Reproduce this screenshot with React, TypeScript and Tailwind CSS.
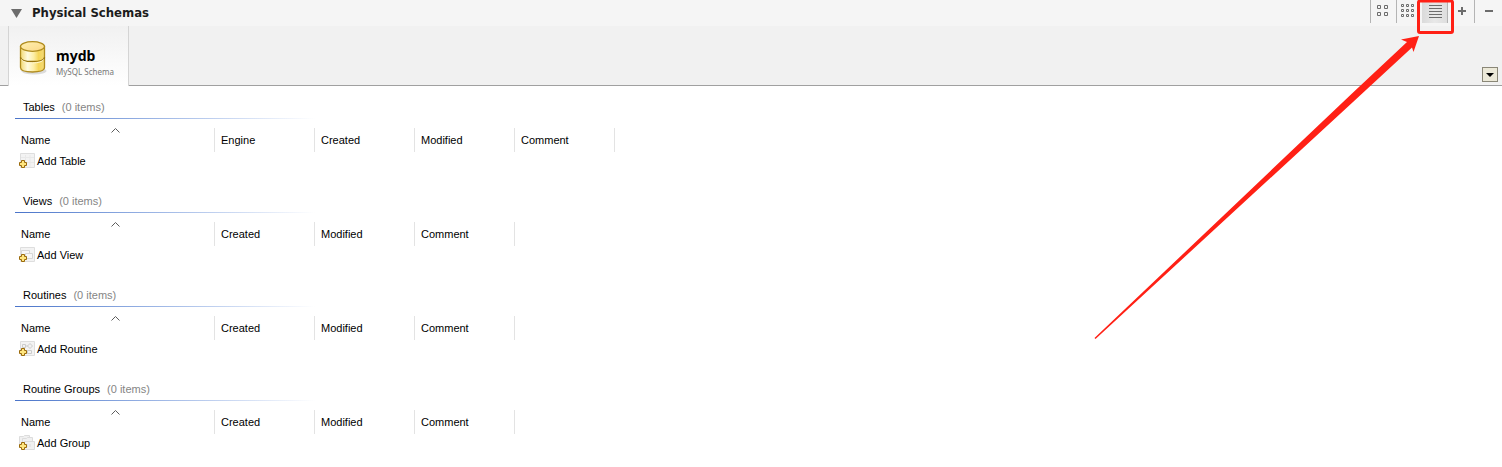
import type { ReactNode } from 'react';

interface SchemaSection {
  id: string;
  title: string;
  action: string;
  columns: string[];
}

const sections: SchemaSection[] = [
  { id: 'table', title: 'Tables', action: 'Add Table', columns: ['Engine', 'Created', 'Modified', 'Comment'] },
  { id: 'view', title: 'Views', action: 'Add View', columns: ['Created', 'Modified', 'Comment'] },
  { id: 'routine', title: 'Routines', action: 'Add Routine', columns: ['Created', 'Modified', 'Comment'] },
  { id: 'group', title: 'Routine Groups', action: 'Add Group', columns: ['Created', 'Modified', 'Comment'] },
];

function DatabaseIcon() {
  return (
    <svg width="30" height="36" viewBox="0 0 30 36" aria-hidden="true">
      <defs>
        <linearGradient id="db-body" x1="0" x2="1">
          <stop offset="0" stopColor="#f3d973" />
          <stop offset="0.3" stopColor="#fffbe0" />
          <stop offset="0.55" stopColor="#fdeea6" />
          <stop offset="0.75" stopColor="#f5d65a" />
          <stop offset="1" stopColor="#f3d978" />
        </linearGradient>
        <linearGradient id="db-top" x1="0" x2="1" y1="0" y2="1">
          <stop offset="0" stopColor="#fff0b0" />
          <stop offset="1" stopColor="#fbd887" />
        </linearGradient>
      </defs>
      <ellipse cx="16" cy="31" rx="12.5" ry="3.5" fill="#000" opacity="0.13" />
      <path d="M2.5 6.5v21c0 3 5.4 4.5 12 4.5s12-1.5 12-4.5v-21z" fill="url(#db-body)" stroke="#b08c1e" strokeWidth="1.3" />
      <path d="M2.5 17.2c0 2.9 5.4 4.3 12 4.3s12-1.4 12-4.3" fill="none" stroke="#97740e" strokeWidth="1.3" />
      <path d="M3.5 19.4c1 2.4 5.6 3.5 11 3.5s10-1.1 11-3.5" fill="none" stroke="#fff7cf" strokeWidth="1" />
      <ellipse cx="14.5" cy="6.5" rx="12" ry="4.8" fill="url(#db-top)" stroke="#b08c1e" strokeWidth="1.2" />
    </svg>
  );
}

function AddIcon({ kind }: { kind: string }) {
  return (
    <svg width="16" height="16" viewBox="0 0 16 16" aria-hidden="true">
      {kind !== 'group' && (
        <path d="M1.5 .5h14v14h-14z" fill="#f3f3f3" stroke="#dedede" />
      )}
      {kind === 'table' && <path d="M2 4.5h13M6.5 2v12M11 2v12M2 9.5h13" stroke="#e9e9e9" fill="none" />}
      {kind === 'view' && (
        <g fill="#f7f7f7" stroke="#d6d6d6">
          <path d="M2.5 3.5h8v6h-8z" />
          <path d="M6.5 6.5h7v5h-7z" />
        </g>
      )}
      {kind === 'routine' && (
        <g fill="none" stroke="#cccccc">
          <path d="M3.5 3.5h3v3h-3zM8.5 9.5h4v3h-4zM5 7v3M7 5h2" />
          <path d="M11 2.5l2.5 2.5-2.5 2.5-2.5-2.5z" />
        </g>
      )}
      {kind === 'group' && (
        <g fill="#f0f0f0" stroke="#dcdcdc">
          <path d="M.5 1.5h4l1-1h5v11h-10z" />
          <path d="M3.5 3.5h4l1-1h5v10h-10z" />
          <path d="M5.5 6.5h10v8h-10zM8 9v3M11 9v3" />
        </g>
      )}
      <path d="M2.5 7.5h3v2h2v3h-2v2h-3v-2h-2v-3h2z" fill="#ffe680" stroke="#9a6a0c" />
    </svg>
  );
}

function ToolButton({ label, className, children }: { label: string; className: string; children: ReactNode }) {
  return (
    <button type="button" aria-label={label} className={`flex h-[23px] w-[26px] items-center pb-px pl-1 ${className}`}>
      <svg width="16" height="16" viewBox="0 0 16 16" aria-hidden="true">
        {children}
      </svg>
    </button>
  );
}

function Toolbar() {
  return (
    <div className="flex h-[23px] pr-[2px]">
      <ToolButton label="Large icons" className="border-l border-[#b4b4b4]">
        <path d="M2.5 2.5h3v3h-3zM9.5 2.5h3v3h-3zM2.5 9.5h3v3h-3zM9.5 9.5h3v3h-3z" fill="none" stroke="#6c6c6c" />
      </ToolButton>
      <ToolButton label="Small icons" className="border-l border-[#b4b4b4]">
        <path
          d="M.5 1.5h2v2h-2zM5.5 1.5h2v2h-2zM10.5 1.5h2v2h-2zM.5 6.5h2v2h-2zM5.5 6.5h2v2h-2zM10.5 6.5h2v2h-2zM.5 11.5h2v2h-2zM5.5 11.5h2v2h-2zM10.5 11.5h2v2h-2z"
          fill="none"
          stroke="#6c6c6c"
        />
      </ToolButton>
      <ToolButton label="Details" className="border-r border-[#b4b4b4] bg-linear-to-r from-[#dadada] via-[#e8e8e8] to-[#dedede]">
        <path d="M3 2.5h13M3 5.5h13M3 8.5h13M3 11.5h13M3 14.5h13" stroke="#6c6c6c" />
      </ToolButton>
      <ToolButton label="Add schema" className="">
        <path d="M6 8h8M10 4v8" stroke="#6c6c6c" strokeWidth="2" />
      </ToolButton>
      <ToolButton label="Remove schema" className="border-l border-[#b4b4b4]">
        <path d="M6 8h8" stroke="#6c6c6c" strokeWidth="2" />
      </ToolButton>
    </div>
  );
}

function SectionTable({ section }: { section: SchemaSection }) {
  return (
    <section className="py-[10px]">
      <h2 className="flex h-[22px] items-center gap-[7px] pl-2">
        {section.title}
        <span className="text-[#858585]">(0 items)</span>
      </h2>
      <div className="h-px w-[300px] bg-linear-to-r from-[#4a74c9] to-white" />
      <table className="mt-[9px] table-fixed border-collapse text-left">
        <thead>
          <tr className="h-6">
            <th className="relative w-[200px] p-0 pl-[6px] font-normal">
              Name
              <svg className="absolute top-0 left-24" width="9" height="5" viewBox="0 0 9 5" aria-hidden="true">
                <path d="M.5 4.5l4-4 4 4" fill="none" stroke="#5c5c5c" />
              </svg>
              <span className="absolute top-0 right-0 h-6 w-px bg-[#e3e3e3]" />
            </th>
            {section.columns.map((column) => (
              <th key={column} className="relative w-[100px] p-0 pl-[6px] font-normal">
                {column}
                <span className="absolute top-0 right-0 h-6 w-px bg-[#e3e3e3]" />
              </th>
            ))}
          </tr>
        </thead>
        <tbody>
          <tr>
            <td colSpan={section.columns.length + 1} className="p-0">
              <button type="button" className="flex h-[18px] items-center gap-[2px] pl-1">
                <AddIcon kind={section.id} />
                {section.action}
              </button>
            </td>
          </tr>
        </tbody>
      </table>
    </section>
  );
}

export default function App() {
  return (
    <div className="relative min-h-screen bg-white font-['Liberation_Sans',Arial,sans-serif] text-[11px] leading-4 text-black">
      <header className="flex h-[26px] justify-between bg-[#f5f5f5]">
        <button type="button" className="flex items-center gap-[10px] pl-[11px] font-['DejaVu_Sans_Condensed',Tahoma,sans-serif] text-[13px] font-bold text-[#1c1c1c]">
          <svg width="11" height="9" viewBox="0 0 11 9" aria-hidden="true">
            <path d="M0 0h11L5.5 9z" fill="#6c6c6c" />
          </svg>
          Physical Schemas
        </button>
        <Toolbar />
      </header>

      <div className="flex h-[60px] items-end justify-between border-b border-[#a0a0a0] bg-[#f1f1f1] pl-2">
        <button type="button" className="-mb-px flex h-[60px] w-[121px] border-x border-[#d4d4d4] bg-linear-to-b from-[#f1f1f1] to-white pt-[14px] pl-[9px] text-left font-['Noto_Sans',Tahoma,sans-serif]">
          <DatabaseIcon />
          <span className="flex flex-col pt-2 pl-2">
            <span className="text-[14px] leading-4 font-bold">mydb</span>
            <span className="text-[8px] leading-4 text-[#777777]">MySQL Schema</span>
          </span>
        </button>
        <button type="button" aria-label="More schemas" className="mr-1 mb-[3px] flex h-[15px] w-4 items-center justify-center border border-[#8a8777] bg-[#ece9d8]">
          <svg width="8" height="4" viewBox="0 0 8 4" aria-hidden="true">
            <path d="M0 0h8L4 4z" fill="#000" />
          </svg>
        </button>
      </div>

      <main className="pl-[15px]">
        {sections.map((section) => (
          <SectionTable key={section.id} section={section} />
        ))}
      </main>

      {/* Callout pointing at the details view button */}
      <svg className="pointer-events-none absolute top-0 right-0" width="420" height="345" viewBox="0 0 420 345" aria-hidden="true">
        <rect x="336.5" y="1" width="34" height="31.5" rx="1.5" fill="none" stroke="#ff2015" strokeWidth="3" />
        <path d="M337 36L319 39.5 325 42 270 93.5 12.5 338 13.5 339 271 102 330 47.5 331.5 52z" fill="#ff2015" />
      </svg>
    </div>
  );
}
